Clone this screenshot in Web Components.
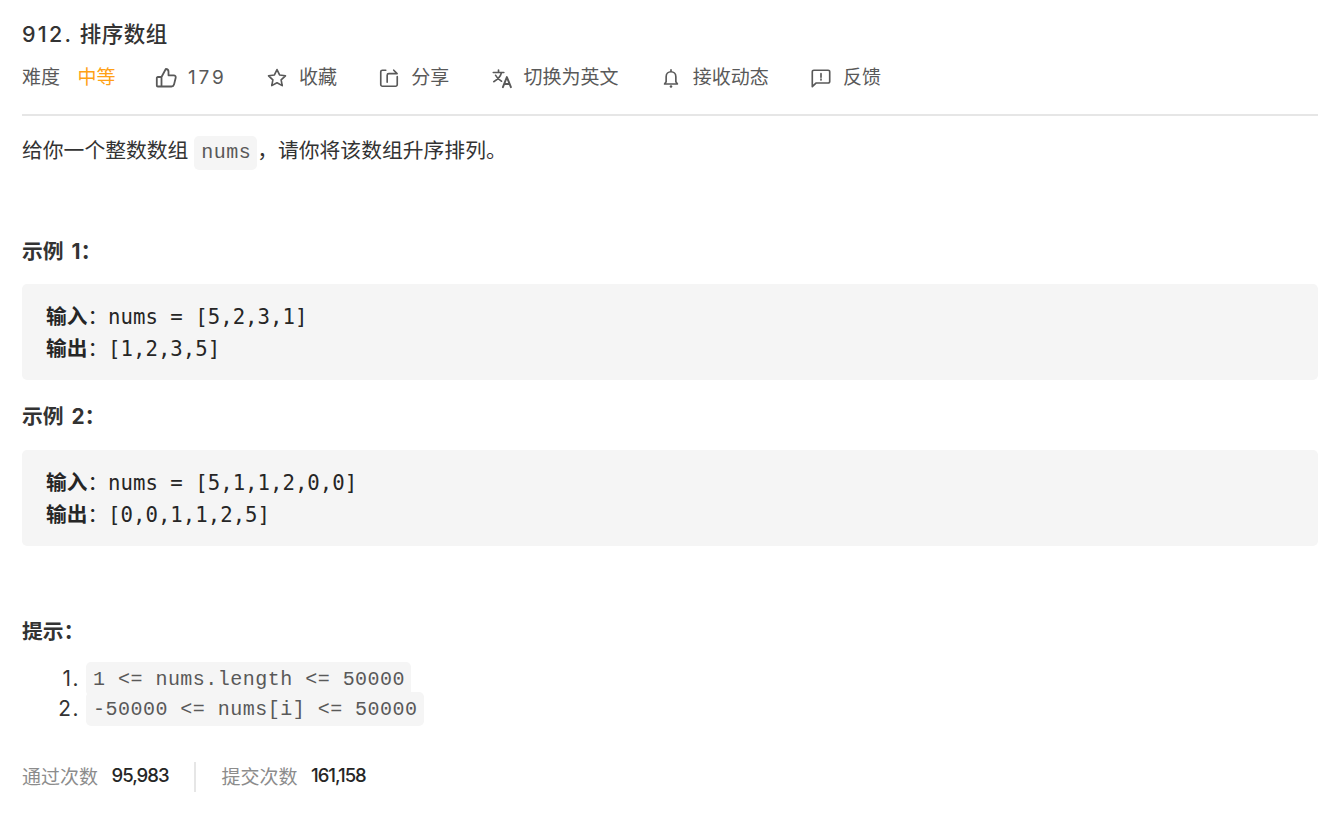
<!DOCTYPE html>
<html lang="zh"><head><meta charset="utf-8"><title>912. 排序数组</title>
<style>
html,body{margin:0;background:#fff}
body{font-family:Inter,"Noto Sans CJK SC",sans-serif;color:#333;font-size:20.8px}
</style></head><body>
<lc-problem>
  <lc-header slot="header" number="912." name="排序数组"></lc-header>
  <lc-para>给你一个整数数组&nbsp;<lc-code>nums</lc-code>，请你将该数组升序排列。</lc-para>
  <lc-heading style="margin-top:66px">示例 1：</lc-heading>
  <lc-pre><b>输入</b>：nums = [5,2,3,1]
<b>输出</b>：[1,2,3,5]</lc-pre>
  <lc-heading style="margin-top:21px">示例 2：</lc-heading>
  <lc-pre style="margin-top:17px"><b>输入</b>：nums = [5,1,1,2,0,0]
<b>输出</b>：[0,0,1,1,2,5]</lc-pre>
  <lc-heading style="margin-top:70px">提示：</lc-heading>
  <lc-list>
    <lc-item n="1."><lc-code>1 &lt;= nums.length &lt;= 50000</lc-code></lc-item>
    <lc-item n="2."><lc-code>-50000 &lt;= nums[i] &lt;= 50000</lc-code></lc-item>
  </lc-list>
  <lc-stats></lc-stats>
</lc-problem>
<script>
const I={
 like:'<path d="M7.500 11V20.500M2.800 12A1 1 0 0 1 3.800 11H7.500L11.800 3C13.300 3 14.500 4.200 14.500 5.700V9.300H19.800C21.100 9.300 22 10.500 21.700 11.700L20 18.600C19.700 19.700 18.700 20.500 17.500 20.500H3.800A1 1 0 0 1 2.800 19.500Z"/>',
 star:'<path d="M12 2.800l2.800 5.900 6.400.9-4.700 4.400 1.200 6.300-5.700-3.100-5.700 3.100 1.200-6.300-4.700-4.400 6.400-.9z"/>',
 share:'<path d="M8.500 3.500H4.800A1.800 1.800 0 0 0 3 5.300V19.200A1.800 1.800 0 0 0 4.800 21H19.200A1.800 1.800 0 0 0 21 19.200V10.500M10 16.500V9A1.800 1.800 0 0 1 11.800 7.200H20.500M17.200 3.500L20.800 7.200"/>',
 trans:'<path d="M2.500 6H14M8.200 3.300V6M11.500 6C10.500 10 7.500 13.500 3 16M5 9C6.500 12 8.500 14.100 11.500 15.500"/><path d="M13 22L17.300 11L21.700 22M14.500 18.500H20.200" stroke-width="2.100"/>',
 bell:'<path d="M5 18.500h14l-1.700-2.500V10.500A5.300 5.300 0 0 0 12 5.200 5.300 5.300 0 0 0 6.700 10.500v5.500zM12 3v2.200"/><circle cx="12" cy="21.200" r="1.400" fill="currentColor" stroke="none"/>',
 flag:'<path d="M2.500 21.500V5.200A1.700 1.700 0 0 1 4.200 3.500H19.800A1.700 1.700 0 0 1 21.500 5.200V15.800A1.700 1.700 0 0 1 19.800 17.500H6.500zM12 7.300V11.300M12 13.300V14.300" />'
};
const icon=(n)=>{const big=n==='like';return `<svg viewBox="0 0 24 24" width="${big?24:22}" height="${big?24:22}" fill="none" stroke="currentColor" stroke-width="1.800" stroke-linejoin="round" stroke-linecap="round" style="margin:${big?'0 -2px 0 0':'0 -1px 0 1px'}">${I[n]}</svg>`};
function def(name,css,html){
  customElements.define(name,class extends HTMLElement{
    constructor(){super();this.attachShadow({mode:'open'});}
    connectedCallback(){this.shadowRoot.innerHTML=`<style>${css}</style>`+(typeof html==='function'?html(this):html);}
  });
}
def('lc-problem',':host{display:block;padding:0 14px 0 22px}','<slot name="header"></slot><slot></slot>');
def('lc-meta-item',':host{display:inline-flex;align-items:center;gap:12px;color:#595959;font-size:19px;line-height:28px}',
 h=>`${h.getAttribute('icon')?icon(h.getAttribute('icon')):''}<slot></slot>`);
def('lc-header',`:host{display:block;border-bottom:2px solid #e6e6e6;height:116px;box-sizing:border-box;padding-top:19px}
 h4{margin:0;font-size:21.500px;line-height:30px;font-weight:500;color:#333;letter-spacing:.5px}
 .n{letter-spacing:2.300px}
 .row{display:flex;align-items:center;margin-top:15px;color:#595959;font-size:19px;line-height:28px}
 .d{margin-right:38px}.d i{font-style:normal;color:#ffa116;margin-left:17.500px}
 lc-meta-item{margin-right:40.250px}`,
 h=>`<h4><span class="n">${h.getAttribute('number')}</span> ${h.getAttribute('name')}</h4>
 <div class="row"><span class="d">难度<i>中等</i></span>
 <lc-meta-item icon="like" style="margin-right:40px"><span style="display:block;width:37px;letter-spacing:2.800px;margin-left:.5px">179</span></lc-meta-item>
 <lc-meta-item icon="star">收藏</lc-meta-item>
 <lc-meta-item icon="share">分享</lc-meta-item>
 <lc-meta-item icon="trans">切换为英文</lc-meta-item>
 <lc-meta-item icon="bell">接收动态</lc-meta-item>
 <lc-meta-item icon="flag">反馈</lc-meta-item></div>`);
def('lc-para',':host{display:block;margin-top:17px;line-height:36px;font-size:20.8px}','<slot></slot>');
def('lc-code',`:host{display:inline-block;font-family:"Liberation Mono",monospace;font-size:20px;letter-spacing:.48px;line-height:34px;background:#f5f5f5;border-radius:5px;padding:0 6px 0 7px;color:#595959;vertical-align:baseline}`,'<slot></slot>');
def('lc-heading',':host{display:block;font-size:20.8px;line-height:32px;font-weight:700;color:#333;word-spacing:3px}','<slot></slot>');
def('lc-pre',`:host{display:block;margin-top:16px;background:#f5f5f5;border-radius:5px;padding:17px 24px 15px;white-space:pre;font-family:"DejaVu Sans Mono","Noto Sans CJK SC",monospace;font-size:20.700px;line-height:32px;color:#262626}`,'<slot></slot>');
def('lc-list',':host{display:block;margin-top:16px}','<slot></slot>');
def('lc-item',`:host{display:flex;height:30px;align-items:center;line-height:30px;font-size:20.800px}
 .n{width:64px;flex:none;text-align:right;padding-right:6px;box-sizing:border-box;letter-spacing:1.500px}
 ::slotted(lc-code){padding-top:2px;line-height:32px}`,
 h=>`<span class="n">${h.getAttribute('n')}</span><slot></slot>`);
def('lc-stats',`:host{display:flex;align-items:center;margin-top:38px;height:30px;font-size:19px;color:#8c8c8c}
 span,b{margin-bottom:4px}
 b{color:#262626;font-weight:500;font-size:18.500px;margin-left:13.500px;letter-spacing:-1px}
 .sep{width:2px;height:30px;background:#e6e6e6;margin:0 25px 0 26px}`,
 `<span>通过次数</span><b>95,983</b><span class="sep"></span><span>提交次数</span><b>161,158</b>`);
</script>
</body></html>
